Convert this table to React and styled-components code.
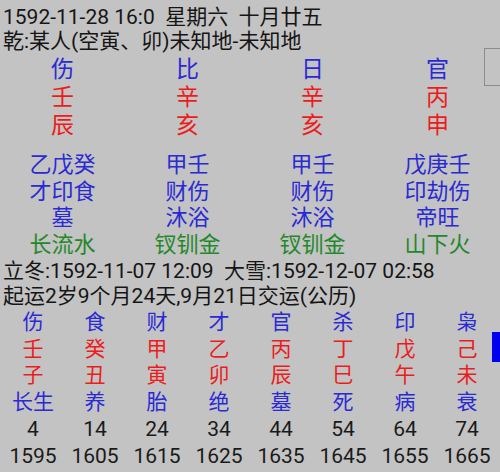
import React from "react";
import styled, { createGlobalStyle } from "styled-components";

const GlobalStyle = createGlobalStyle`
  html, body {
    margin: 0;
    padding: 0;
    background: #c3c3c3;
  }
`;

const BLUE = "#2a2ad4";
const RED = "#ec1c1c";
const GREEN = "#23882a";

const pillars = [
  { god: "伤", stem: "壬", branch: "辰", hidden: "乙戊癸", hiddenGods: "才印食", stage: "墓", nayin: "长流水" },
  { god: "比", stem: "辛", branch: "亥", hidden: "甲壬", hiddenGods: "财伤", stage: "沐浴", nayin: "钗钏金" },
  { god: "日", stem: "辛", branch: "亥", hidden: "甲壬", hiddenGods: "财伤", stage: "沐浴", nayin: "钗钏金" },
  { god: "官", stem: "丙", branch: "申", hidden: "戊庚壬", hiddenGods: "印劫伤", stage: "帝旺", nayin: "山下火" },
];

const dayun = [
  { god: "伤", stem: "壬", branch: "子", stage: "长生", age: 4, year: 1595 },
  { god: "食", stem: "癸", branch: "丑", stage: "养", age: 14, year: 1605 },
  { god: "财", stem: "甲", branch: "寅", stage: "胎", age: 24, year: 1615 },
  { god: "才", stem: "乙", branch: "卯", stage: "绝", age: 34, year: 1625 },
  { god: "官", stem: "丙", branch: "辰", stage: "墓", age: 44, year: 1635 },
  { god: "杀", stem: "丁", branch: "巳", stage: "死", age: 54, year: 1645 },
  { god: "印", stem: "戊", branch: "午", stage: "病", age: 64, year: 1655 },
  { god: "枭", stem: "己", branch: "未", stage: "衰", age: 74, year: 1665 },
];

const App = () => {
  return (
    <Page>
      <GlobalStyle />
      <InfoBlock $top={5}>
        <InfoLine>{"1592-11-28 16:0  星期六  十月廿五"}</InfoLine>
        <InfoLine>乾:某人(空寅、卯)未知地-未知地</InfoLine>
      </InfoBlock>

      <PillarGrid>
        {pillars.map((p, i) => (
          <Column key={i}>
            <BigCell $color={BLUE}>{p.god}</BigCell>
            <BigCell $color={RED}>{p.stem}</BigCell>
            <BigCell $color={RED}>{p.branch}</BigCell>
          </Column>
        ))}
      </PillarGrid>

      <HiddenGrid>
        {pillars.map((p, i) => (
          <Column key={i}>
            <SmallCell $color={BLUE}>{p.hidden}</SmallCell>
            <SmallCell $color={BLUE}>{p.hiddenGods}</SmallCell>
            <SmallCell $color={BLUE}>{p.stage}</SmallCell>
            <SmallCell $color={GREEN}>{p.nayin}</SmallCell>
          </Column>
        ))}
      </HiddenGrid>

      <InfoBlock $top={0}>
        <TermLine>{"立冬:1592-11-07 12:09  大雪:1592-12-07 02:58"}</TermLine>
        <TermLine>起运2岁9个月24天,9月21日交运(公历)</TermLine>
      </InfoBlock>

      <DayunGrid>
        {dayun.map((d, i) => (
          <Column key={i}>
            <DayunCell $color={BLUE}>{d.god}</DayunCell>
            <DayunCell $color={RED}>{d.stem}</DayunCell>
            <DayunCell $color={RED}>{d.branch}</DayunCell>
            <DayunCell $color={BLUE}>{d.stage}</DayunCell>
            <DayunCell $color="#1a1a1a">{d.age}</DayunCell>
            <DayunCell $color="#1a1a1a">{d.year}</DayunCell>
          </Column>
        ))}
      </DayunGrid>

      <EdgeButton />
      <ScrollMark />
    </Page>
  );
};

export default App;

const Page = styled.div`
  position: relative;
  width: 500px;
  height: 472px;
  overflow: hidden;
  background: #c3c3c3;
  font-family: Roboto, "Noto Sans CJK SC", sans-serif;
  color: #151515;
`;

const InfoBlock = styled.div`
  padding-top: ${(p) => p.$top}px;
  padding-left: 3px;
`;

const InfoLine = styled.div`
  font-size: 21px;
  line-height: 24px;
  height: 24px;
  white-space: pre;
`;

const TermLine = styled.div`
  font-size: 21px;
  line-height: 25px;
  height: 25px;
  white-space: pre;
`;

const PillarGrid = styled.div`
  display: grid;
  grid-template-columns: repeat(4, 1fr);
  padding-top: 3px;
`;

const HiddenGrid = styled.div`
  display: grid;
  grid-template-columns: repeat(4, 1fr);
  padding-top: 12px;
`;

const DayunGrid = styled.div`
  display: grid;
  grid-template-columns: repeat(8, 1fr);
  padding-left: 2px;
  width: 496px;
`;

const Column = styled.div`
  display: flex;
  flex-direction: column;
  align-items: center;
`;

const BigCell = styled.div`
  font-size: 23px;
  line-height: 28px;
  height: 28px;
  color: ${(p) => p.$color};
`;

const SmallCell = styled.div`
  font-size: 22px;
  line-height: 26.7px;
  height: 26.7px;
  color: ${(p) => p.$color};
`;

const DayunCell = styled.div`
  font-size: 21px;
  line-height: 26.8px;
  height: 26.8px;
  color: ${(p) => p.$color};
`;

const EdgeButton = styled.div`
  position: absolute;
  left: 484px;
  top: 48px;
  width: 20px;
  height: 38px;
  border: 1.5px solid #8c8c8c;
  box-sizing: border-box;
`;

const ScrollMark = styled.div`
  position: absolute;
  left: 492px;
  top: 332px;
  width: 8px;
  height: 30px;
  background: #0000ee;
`;
